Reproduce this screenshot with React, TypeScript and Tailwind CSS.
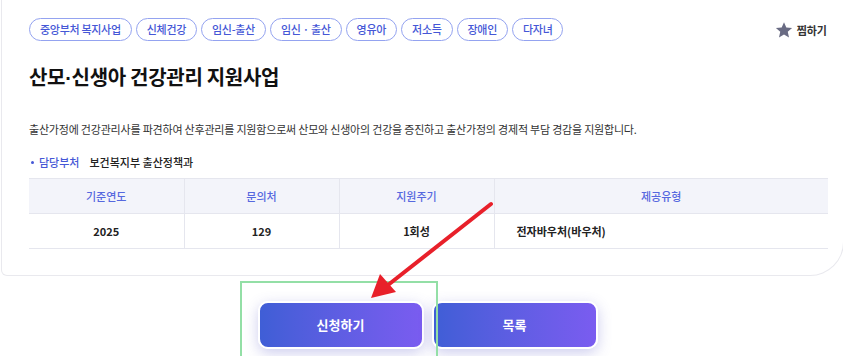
const tags = ["중앙부처 복지사업", "신체건강", "임신-출산", "임신 · 출산", "영유아", "저소득", "장애인", "다자녀"];

function App() {
    return (
        <div className="relative h-[356px] w-[843px] overflow-hidden bg-white" style={{ fontFamily: '"Noto Sans CJK KR", "Noto Sans", sans-serif' }}>
            {/* Card */}
            <div className="ml-[1px] h-[276px] w-[843px] rounded-bl-md rounded-br-[34px] border-x border-b border-[#e9e9ee] bg-white pl-[27px] pr-[15px] pt-[18px]">
                <div className="flex items-start justify-between">
                    <div className="flex gap-[4px]">
                        {tags.map((t) => (
                            <span key={t} className="flex h-[23px] items-center rounded-full border border-[#94a3f0] px-[10px] text-[11px] font-medium leading-none tracking-[-0.3px] text-[#4557d6]">{t}</span>
                        ))}
                    </div>
                    <button className="mr-[1px] mt-[3px] flex items-center gap-[4px] text-[11px] font-bold text-[#333]">
                        <svg width="18" height="18" viewBox="0 0 24 24" fill="#696b83">
                            <path d="M12 1.5l3.1 7.1 7.7.7-5.8 5.1 1.7 7.6L12 18l-6.7 4 1.7-7.6L1.2 9.3l7.7-.7z" />
                        </svg>
                        찜하기
                    </button>
                </div>
                <h1 className="mt-[22px] text-[20px] font-bold leading-[28px] tracking-[-0.3px] text-[#111]">
                    산모<span className="font-['Liberation_Sans',sans-serif]">·</span>신생아 건강관리 지원사업
                </h1>
                <p className="mt-[29px] text-[11px] leading-[16px] tracking-[-0.2px] text-[#333]">출산가정에 건강관리사를 파견하여 산후관리를 지원함으로써 산모와 신생아의 건강을 증진하고 출산가정의 경제적 부담 경감을 지원합니다.</p>
                <div className="mt-[17px] flex items-center text-[11px] leading-[16px]">
                    <span className="ml-[2px] mr-[5px] h-[3px] w-[3px] rounded-full bg-[#4557d6]"></span>
                    <span className="mr-[10px] font-medium text-[#4557d6]">담당부처</span>
                    <span className="font-medium text-[#222]">보건복지부 출산정책과</span>
                </div>
                <table className="mt-[8px] w-[799px] border-collapse text-[11px]">
                    <thead>
                        <tr className="h-[35px] border-t border-[#e5e6ee] bg-[#f3f4fa] font-medium text-[#5668df]">
                            <th className="w-[155px] border-r border-[#e5e6ee] font-medium">기준연도</th>
                            <th className="w-[155px] border-r border-[#e5e6ee] font-medium">문의처</th>
                            <th className="w-[155px] border-r border-[#e5e6ee] font-medium">지원주기</th>
                            <th className="font-medium">제공유형</th>
                        </tr>
                    </thead>
                    <tbody>
                        <tr className="h-[35px] border-y border-[#e5e6ee] font-bold text-[#222]">
                            <td className="border-r border-[#e5e6ee] text-center">2025</td>
                            <td className="border-r border-[#e5e6ee] text-center">129</td>
                            <td className="border-r border-[#e5e6ee] text-center">1회성</td>
                            <td className="pl-[22px]">전자바우처(바우처)</td>
                        </tr>
                    </tbody>
                </table>
            </div>

            {/* Buttons */}
            <div className="mt-[25px] flex justify-center gap-[8px] pl-[12px]">
                <button className="h-[48px] w-[166px] rounded-[10px] border-2 border-white bg-gradient-to-r from-[#3f5ed6] to-[#7a5cf0] text-[13px] font-bold text-white shadow-[0_4px_14px_rgba(90,90,200,0.3)]">신청하기</button>
                <button className="h-[48px] w-[166px] rounded-[10px] border-2 border-white bg-gradient-to-r from-[#3f5ed6] to-[#7a5cf0] text-[13px] font-bold text-white shadow-[0_4px_14px_rgba(90,90,200,0.3)]">목록</button>
            </div>

            {/* Annotation: green highlight box */}
            <div className="absolute left-[240px] top-[281px] h-[90px] w-[198px] border-2 border-[#93dfa6]"></div>

            {/* Annotation: red arrow */}
            <svg className="absolute left-0 top-0" width="843" height="356" viewBox="0 0 843 356">
                <line x1="491" y1="204" x2="388" y2="285" stroke="#e8202a" strokeWidth="4" strokeLinecap="round" />
                <polygon points="371,298 380,274 396,292" fill="#e8202a" />
            </svg>
        </div>
    );
}

export default App;
